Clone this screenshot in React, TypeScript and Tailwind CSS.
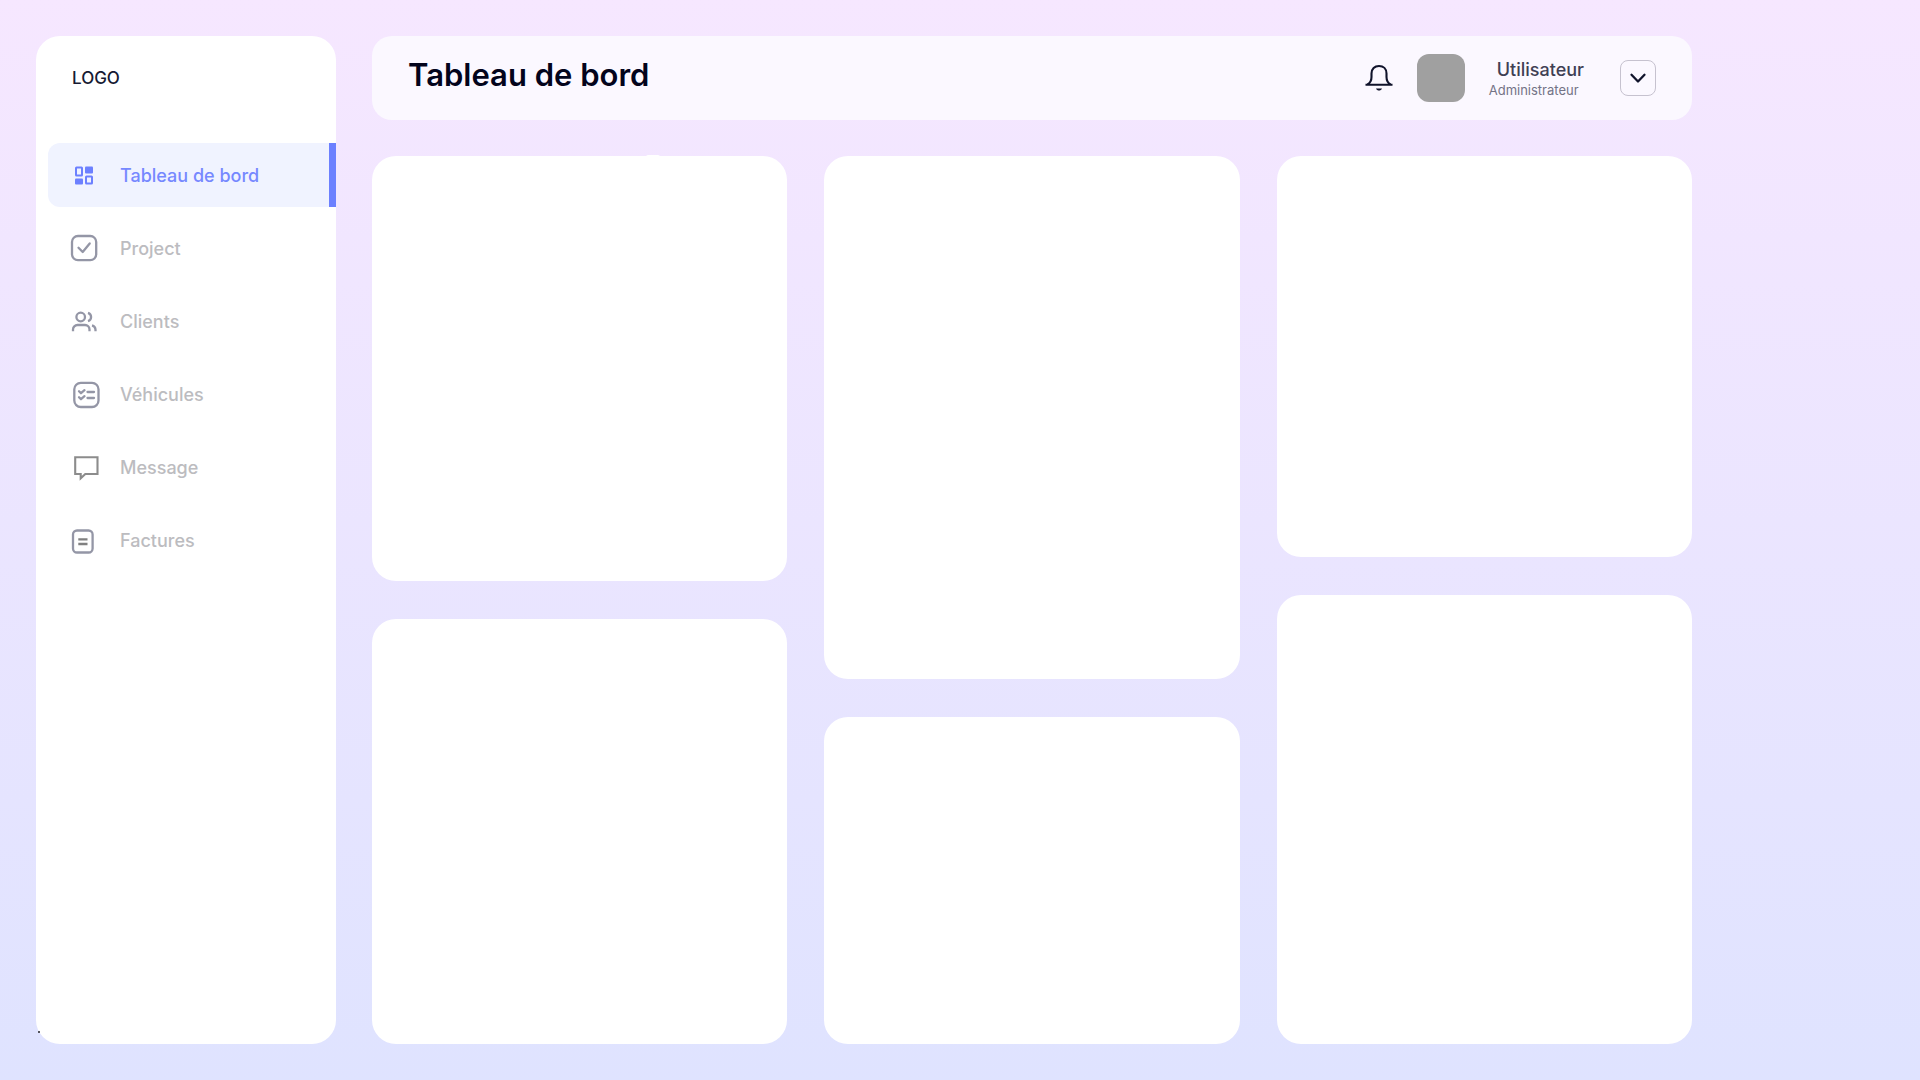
import React from "react";

const stroke = {
  fill: "none",
  stroke: "currentColor",
  strokeWidth: 2.3,
  strokeLinecap: "round" as const,
  strokeLinejoin: "round" as const,
};

function Icon({ children }: { children: React.ReactNode }) {
  return (
    <svg viewBox="0 0 32 32" className="size-8 shrink-0" aria-hidden="true" {...stroke}>
      {children}
    </svg>
  );
}

const items = [
  {
    label: "Tableau de bord",
    active: true,
    icon: (
      <Icon>
        <rect x="8" y="8.5" width="6" height="8" rx="0.5" strokeWidth="2" />
        <rect x="18" y="17.5" width="6" height="7" rx="0.5" strokeWidth="2" />
        <rect x="17" y="7.5" width="8" height="7" rx="1" fill="currentColor" stroke="none" />
        <rect x="7" y="19.5" width="8" height="6" rx="1" fill="currentColor" stroke="none" />
      </Icon>
    ),
  },
  {
    label: "Project",
    icon: (
      <Icon>
        <rect x="4" y="4" width="24.2" height="24.2" rx="6" />
        <path d="M10.5 15.8l4.2 4.2 7-8.5" />
      </Icon>
    ),
  },
  {
    label: "Clients",
    icon: (
      <Icon>
        <circle cx="12.7" cy="12" r="4.3" />
        <path
          strokeLinecap="butt"
          d="M5 26.3v-1.8a4.5 4.5 0 0 1 4.5-4.5h7.5a4.5 4.5 0 0 1 4.5 4.5v1.8M20 7.8a4.4 4.4 0 0 1 0 8.4M24 20.4a4.6 4.6 0 0 1 3.5 4.4v1.5"
        />
      </Icon>
    ),
  },
  {
    label: "Véhicules",
    icon: (
      <Icon>
        <rect x="6.3" y="4.8" width="24.2" height="24.2" rx="6.5" />
        <path d="M11 13.2l2 2 3.5-3M11 19.2l2 2 3.5-3M19.5 14h6.5M19.5 20h6.5" />
      </Icon>
    ),
  },
  {
    label: "Message",
    icon: (
      <Icon>
        <path
          className="text-[#8c8c8c]"
          strokeLinejoin="miter"
          strokeWidth="2.1"
          d="M7.2 6.2h22.3v16.8H17.3l-4.6 4.3v-4.3H7.2z"
        />
      </Icon>
    ),
  },
  {
    label: "Factures",
    icon: (
      <Icon>
        <rect x="5" y="6.5" width="19.6" height="22" rx="4" />
        <path className="text-[#808080]" strokeLinecap="butt" d="M10.3 15.3h9.2M10.3 20h9.2" />
      </Icon>
    ),
  },
];

function Sidebar() {
  return (
    <aside className="relative flex w-[300px] shrink-0 flex-col rounded-3xl bg-white pt-7">
      <p className="px-9 text-[17px] leading-7 font-medium text-[#161a33]">LOGO</p>
      <nav className="mt-[51px] pl-3" aria-label="Navigation principale">
        <ul className="flex flex-col gap-[9px]">
          {items.map((item) => (
            <li key={item.label}>
              <a
                href="#"
                aria-current={item.active ? "page" : undefined}
                className={
                  item.active
                    ? "flex h-16 items-center gap-5 rounded-l-xl border-r-[7px] border-[#6c80ff] bg-[#f0f3ff] pl-5 text-lg font-medium text-[#7688ff]"
                    : "flex h-16 items-center gap-5 pl-5 text-lg font-medium text-[#bcbcc0]"
                }
              >
                <span className={item.active ? "text-[#6c80ff]" : "text-[#9496a6]"}>{item.icon}</span>
                <span className="pt-0.5">{item.label}</span>
              </a>
            </li>
          ))}
        </ul>
      </nav>
      <span className="absolute bottom-[11px] left-0.5 size-0.5 bg-[#55555c]" />
    </aside>
  );
}

function Header() {
  return (
    <header className="flex h-[84px] shrink-0 items-center rounded-[20px] bg-[#fbf8ff] px-9">
      <h1 className="pb-1.5 text-[31px] font-semibold text-[#03041c]">Tableau de bord</h1>
      <button type="button" aria-label="Notifications" className="ml-auto text-[#10132b]">
        <svg viewBox="0 0 28 28" className="size-7" aria-hidden="true" {...stroke} strokeWidth="2.1">
          <path
            strokeLinecap="butt"
            d="M0.5 20.7h27M2.5 20.5c2.6-1.6 4-3.6 4-7.500V9.500C6.500 5 9.600 2 14 2s7.500 3 7.500 7.500V13c0 3.900 1.400 5.900 4 7.500"
          />
          <path d="M11 24.600h6c-.6 1.400-1.700 2-3 2s-2.400-.6-3-2z" fill="currentColor" stroke="none" />
        </svg>
      </button>
      <div className="ml-6 size-12 rounded-xl bg-[#a0a0a0]" />
      <div className="ml-6 flex flex-col">
        <span className="pl-2 text-lg leading-6 font-medium text-[#3f4054]">Utilisateur</span>
        <span className="text-[13px] leading-4 text-[#737386]">Administrateur</span>
      </div>
      <button
        type="button"
        aria-label="Ouvrir le menu utilisateur"
        className="ml-9 flex size-9 items-center justify-center rounded-lg border border-[#c6c2cf] text-[#10132b]"
      >
        <svg viewBox="0 0 18 18" className="size-[18px]" aria-hidden="true" {...stroke}>
          <path d="M2.500 5.800L9 12.500l6.500-6.700" />
        </svg>
      </button>
    </header>
  );
}

function Card() {
  return <section className="rounded-3xl bg-white" />;
}

export default function App() {
  return (
    <div className="min-h-screen bg-linear-to-b from-[#f6e7ff] to-[#dfe3ff] font-['Inter',sans-serif]">
      <div className="flex min-h-screen max-w-[1728px] gap-9 p-9">
        <Sidebar />
        <main className="flex min-w-0 flex-1 flex-col gap-9">
          <Header />
          <div className="relative grid flex-1 grid-cols-3 gap-[37px]">
            <div className="grid grid-rows-[425fr_425fr] gap-[38px]">
              <Card />
              <Card />
            </div>
            <div className="grid grid-rows-[523fr_327fr] gap-[38px]">
              <Card />
              <Card />
            </div>
            <div className="grid grid-rows-[401fr_449fr] gap-[38px]">
              <Card />
              <Card />
            </div>
            <span className="absolute -top-px left-[274px] h-0.5 w-3.5 rounded-t-sm bg-white" />
          </div>
        </main>
      </div>
    </div>
  );
}
